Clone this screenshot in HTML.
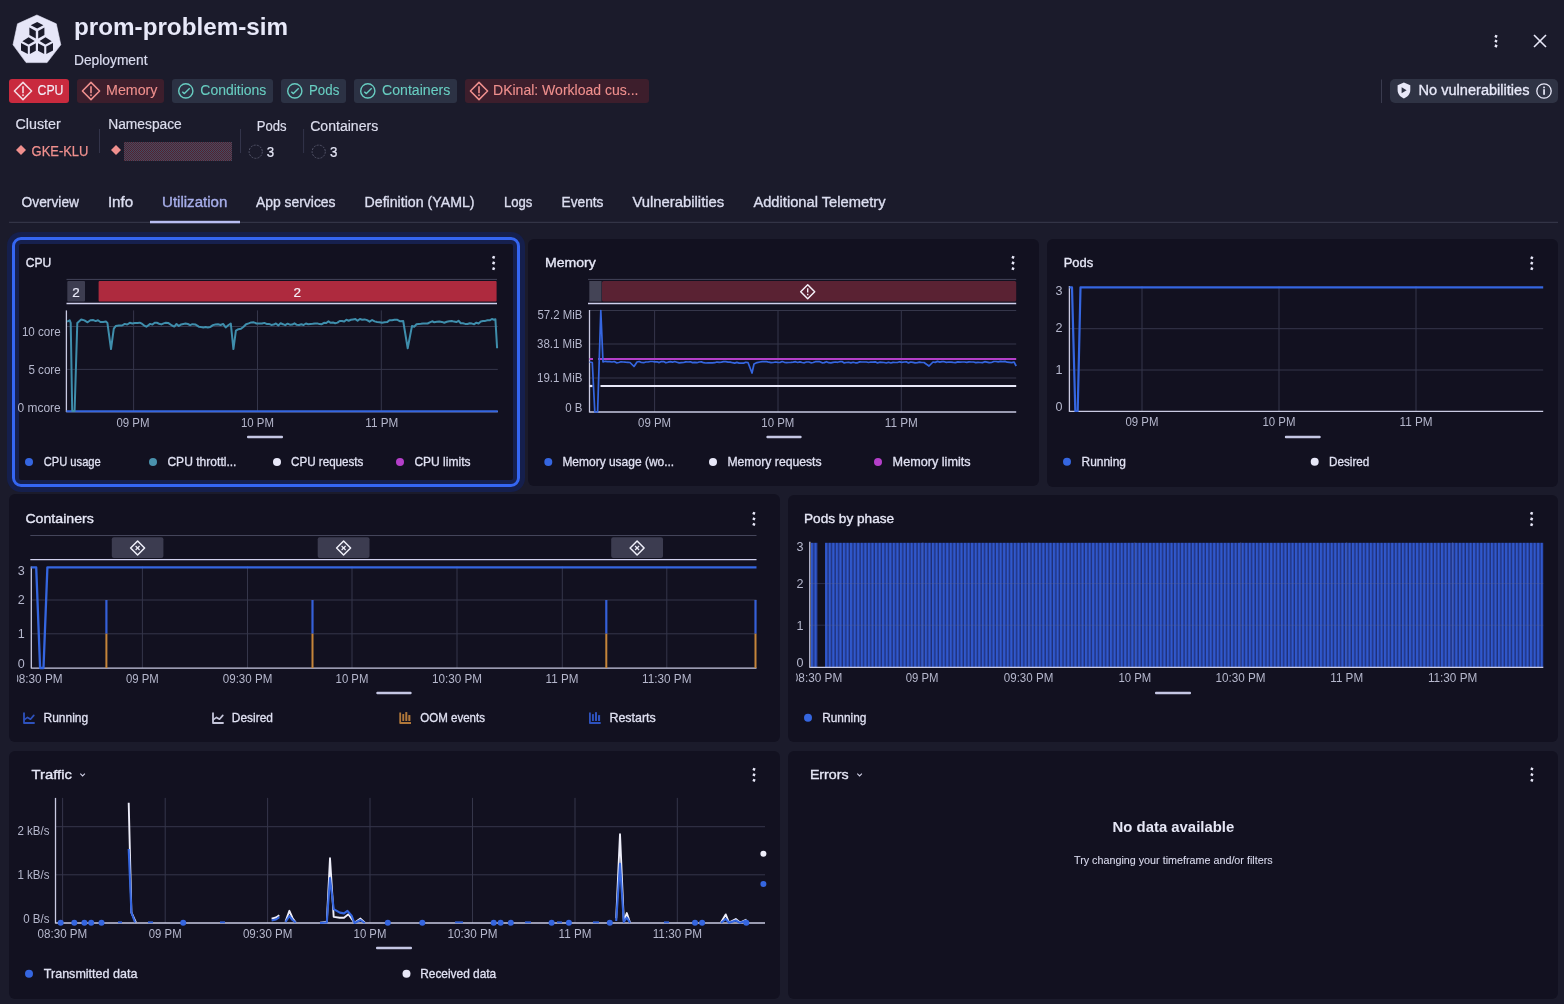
<!DOCTYPE html>
<html><head><meta charset="utf-8"><title>prom-problem-sim</title>
<style>
html,body{margin:0;padding:0;width:1564px;height:1004px;overflow:hidden;background:#1b1b2b;}
body{position:relative;font-family:"Liberation Sans", sans-serif;}
.card{position:absolute;background:#121120;border-radius:6px;}
svg{position:absolute;left:0;top:0;font-family:"Liberation Sans", sans-serif;will-change:transform;}
</style></head><body>
<div class="card" style="left:9px;top:239px;width:511px;height:248px"></div>
<div style="position:absolute;left:12px;top:237px;width:502px;height:244px;border:3px solid #3566f2;border-radius:9px;box-shadow:0 0 0 5px #151f4c, inset 0 0 0 4px #16204e"></div>
<div class="card" style="left:528px;top:239px;width:511px;height:247px"></div>
<div class="card" style="left:1047px;top:239px;width:511px;height:248px"></div>
<div class="card" style="left:9px;top:494px;width:771px;height:248px"></div>
<div class="card" style="left:788px;top:495px;width:770px;height:247px"></div>
<div class="card" style="left:9px;top:751px;width:771px;height:248px"></div>
<div class="card" style="left:788px;top:751px;width:770px;height:248px"></div>
<svg width="1564" height="1004" viewBox="0 0 1564 1004">
<polygon points="36.9,15.0 56.3,23.8 60.8,44.8 47.1,62.6 26.1,62.6 13.0,44.8 17.5,23.8" fill="#e6e6f8" stroke="#e6e6f8" stroke-width="0.6" stroke-linejoin="round"/>
<polygon points="30.7,25.2 37.2,22.0 43.4,25.2 37.2,28.4" fill="#1b1b2b"/>
<polygon points="29.4,27.6 35.8,31.1 35.8,38.6 29.4,35.1" fill="#1b1b2b"/>
<polygon points="38.2,31.1 44.4,27.6 44.4,35.1 38.2,38.6" fill="#1b1b2b"/>
<polygon points="22.4,41.3 28.6,37.3 34.7,41.0 28.6,44.5" fill="#1b1b2b"/>
<polygon points="21.0,42.9 27.8,46.4 27.8,54.0 21.0,50.5" fill="#1b1b2b"/>
<polygon points="29.9,46.4 35.8,43.2 35.8,50.7 29.9,54.0" fill="#1b1b2b"/>
<polygon points="39.6,41.0 45.5,37.3 51.7,41.3 45.5,44.5" fill="#1b1b2b"/>
<polygon points="38.0,43.2 44.2,46.4 44.2,54.0 38.0,50.7" fill="#1b1b2b"/>
<polygon points="46.3,46.4 53.0,42.9 53.0,50.5 46.3,54.0" fill="#1b1b2b"/>
<text x="74.0" y="35.0" font-size="24" font-weight="700" fill="#e8e9f9" textLength="214.0" lengthAdjust="spacingAndGlyphs">prom-problem-sim</text>
<text x="74.0" y="65.2" font-size="14" font-weight="400" fill="#d9dbee" stroke="#d9dbee" stroke-width="0.2" textLength="73.5" lengthAdjust="spacingAndGlyphs">Deployment</text>
<rect x="1494.75" y="35.05" width="2.5" height="2.5" fill="#e8e8f8" transform="rotate(22 1496.0 36.3)"/>
<rect x="1494.75" y="39.90" width="2.5" height="2.5" fill="#e8e8f8" transform="rotate(22 1496.0 41.1)"/>
<rect x="1494.75" y="44.75" width="2.5" height="2.5" fill="#e8e8f8" transform="rotate(22 1496.0 46.0)"/>
<line x1="1534.0" y1="35.0" x2="1546.0" y2="47.0" stroke="#e8e8f8" stroke-width="1.6" />
<line x1="1546.0" y1="35.0" x2="1534.0" y2="47.0" stroke="#e8e8f8" stroke-width="1.6" />
<rect x="9.0" y="79.0" width="60.0" height="24.0" rx="3" fill="#c92a3e" />
<path d="M14.4 91.0 L23.0 82.4 L31.6 91.0 L23.0 99.6 Z" fill="none" stroke="#f4dce4" stroke-width="1.5" stroke-linejoin="round"/>
<line x1="23.0" y1="86.2" x2="23.0" y2="93.2" stroke="#f4dce4" stroke-width="1.6" />
<rect x="22.2" y="94.4" width="1.6" height="1.7" rx="0" fill="#f4dce4" />
<text x="37.5" y="95.0" font-size="14" font-weight="400" fill="#f2f0fa" stroke="#f2f0fa" stroke-width="0.1" textLength="26.0" lengthAdjust="spacingAndGlyphs">CPU</text>
<rect x="77.0" y="79.0" width="87.0" height="24.0" rx="3" fill="#3d1e2c" />
<path d="M82.4 91.0 L91.0 82.4 L99.6 91.0 L91.0 99.6 Z" fill="none" stroke="#f0908e" stroke-width="1.5" stroke-linejoin="round"/>
<line x1="91.0" y1="86.2" x2="91.0" y2="93.2" stroke="#f0908e" stroke-width="1.6" />
<rect x="90.2" y="94.4" width="1.6" height="1.7" rx="0" fill="#f0908e" />
<text x="106.0" y="95.0" font-size="14" font-weight="400" fill="#f0908e" stroke="#f0908e" stroke-width="0.1" textLength="51.5" lengthAdjust="spacingAndGlyphs">Memory</text>
<rect x="172.0" y="79.0" width="101.0" height="24.0" rx="3" fill="#2c3244" />
<circle cx="185.8" cy="90.9" r="7.1" fill="none" stroke="#68cdc1" stroke-width="1.4"/>
<polyline points="182.3,91.8 184.4,93.6 189.7,88.3" fill="none" stroke="#68cdc1" stroke-width="1.4" stroke-linejoin="round" />
<text x="200.3" y="95.0" font-size="14" font-weight="400" fill="#68cdc1" stroke="#68cdc1" stroke-width="0.1" textLength="66.0" lengthAdjust="spacingAndGlyphs">Conditions</text>
<rect x="281.0" y="79.0" width="65.0" height="24.0" rx="3" fill="#2c3244" />
<circle cx="294.8" cy="90.9" r="7.1" fill="none" stroke="#68cdc1" stroke-width="1.4"/>
<polyline points="291.3,91.8 293.4,93.6 298.7,88.3" fill="none" stroke="#68cdc1" stroke-width="1.4" stroke-linejoin="round" />
<text x="309.0" y="95.0" font-size="14" font-weight="400" fill="#68cdc1" stroke="#68cdc1" stroke-width="0.1" textLength="30.3" lengthAdjust="spacingAndGlyphs">Pods</text>
<rect x="354.0" y="79.0" width="103.0" height="24.0" rx="3" fill="#2c3244" />
<circle cx="367.8" cy="90.9" r="7.1" fill="none" stroke="#68cdc1" stroke-width="1.4"/>
<polyline points="364.3,91.8 366.4,93.6 371.7,88.3" fill="none" stroke="#68cdc1" stroke-width="1.4" stroke-linejoin="round" />
<text x="382.0" y="95.0" font-size="14" font-weight="400" fill="#68cdc1" stroke="#68cdc1" stroke-width="0.1" textLength="68.3" lengthAdjust="spacingAndGlyphs">Containers</text>
<rect x="465.0" y="79.0" width="184.0" height="24.0" rx="3" fill="#3d1e2c" />
<path d="M470.4 91.0 L479.0 82.4 L487.6 91.0 L479.0 99.6 Z" fill="none" stroke="#f0908e" stroke-width="1.5" stroke-linejoin="round"/>
<line x1="479.0" y1="86.2" x2="479.0" y2="93.2" stroke="#f0908e" stroke-width="1.6" />
<rect x="478.2" y="94.4" width="1.6" height="1.7" rx="0" fill="#f0908e" />
<text x="493.0" y="95.0" font-size="14" font-weight="400" fill="#f0908e" stroke="#f0908e" stroke-width="0.1" textLength="145.5" lengthAdjust="spacingAndGlyphs">DKinal: Workload cus...</text>
<line x1="1381.5" y1="79.5" x2="1381.5" y2="103.0" stroke="#3a3b4e" stroke-width="1" />
<rect x="1390.0" y="79.0" width="168.0" height="24.0" rx="5" fill="#2f3344" />
<path d="M1397.6 85.2 L1403.9 82.6 L1410.3 85.2 L1410.3 90 C1410.3 94.2 1407.5 96.8 1403.9 98.4 C1400.3 96.8 1397.6 94.2 1397.6 90 Z" fill="#e8e8f8"/>
<path d="M1401.6 87.2 L1406.6 90.2 L1401.6 93.2 Z" fill="#2f3344"/>
<text x="1418.5" y="95.0" font-size="14" font-weight="400" fill="#e8e9f9" stroke="#e8e9f9" stroke-width="0.3" textLength="111.0" lengthAdjust="spacingAndGlyphs">No vulnerabilities</text>
<circle cx="1544" cy="91" r="7.2" fill="none" stroke="#e8e8f8" stroke-width="1.3"/>
<rect x="1543.2" y="89.2" width="1.7" height="5.6" rx="0" fill="#e8e8f8" />
<rect x="1543.2" y="86.6" width="1.7" height="1.7" rx="0" fill="#e8e8f8" />
<text x="15.5" y="129.0" font-size="14" font-weight="400" fill="#dcdded" stroke="#dcdded" stroke-width="0.2" textLength="45.3" lengthAdjust="spacingAndGlyphs">Cluster</text>
<text x="108.2" y="129.0" font-size="14" font-weight="400" fill="#dcdded" stroke="#dcdded" stroke-width="0.2" textLength="73.6" lengthAdjust="spacingAndGlyphs">Namespace</text>
<text x="256.7" y="131.0" font-size="14" font-weight="400" fill="#dcdded" stroke="#dcdded" stroke-width="0.2" textLength="29.9" lengthAdjust="spacingAndGlyphs">Pods</text>
<text x="310.2" y="131.0" font-size="14" font-weight="400" fill="#dcdded" stroke="#dcdded" stroke-width="0.2" textLength="68.0" lengthAdjust="spacingAndGlyphs">Containers</text>
<line x1="99.5" y1="129.0" x2="99.5" y2="153.0" stroke="#33344a" stroke-width="1" />
<line x1="240.5" y1="129.0" x2="240.5" y2="153.0" stroke="#33344a" stroke-width="1" />
<line x1="303.6" y1="129.0" x2="303.6" y2="153.0" stroke="#33344a" stroke-width="1" />
<path d="M21 145 L26 150 L21 155 L16 150 Z" fill="#f0908e"/>
<text x="31.6" y="155.5" font-size="14" font-weight="400" fill="#f0908e" stroke="#f0908e" stroke-width="0.25" textLength="56.8" lengthAdjust="spacingAndGlyphs">GKE-KLU</text>
<path d="M116 145 L121 150 L116 155 L111 150 Z" fill="#f0908e"/>
<defs><pattern id="redact" x="0" y="0" width="2" height="2" patternUnits="userSpaceOnUse"><rect width="2" height="2" fill="#454b62"/><rect width="1" height="1" fill="#53222f"/><rect x="1" y="1" width="1" height="1" fill="#53222f"/></pattern></defs>
<rect x="124.0" y="142.0" width="108.0" height="19.0" rx="0" fill="url(#redact)" />
<circle cx="255.7" cy="151.7" r="6.6" fill="none" stroke="#55566a" stroke-width="1" stroke-dasharray="2 1.2"/>
<text x="266.8" y="157.0" font-size="14" font-weight="400" fill="#e4e5f5" stroke="#e4e5f5" stroke-width="0.2" textLength="7.4" lengthAdjust="spacingAndGlyphs">3</text>
<circle cx="318.7" cy="151.7" r="6.6" fill="none" stroke="#55566a" stroke-width="1" stroke-dasharray="2 1.2"/>
<text x="330.0" y="157.0" font-size="14" font-weight="400" fill="#e4e5f5" stroke="#e4e5f5" stroke-width="0.2" textLength="7.4" lengthAdjust="spacingAndGlyphs">3</text>
<text x="21.6" y="207.3" font-size="14" font-weight="400" fill="#dcdef0" stroke="#dcdef0" stroke-width="0.35" textLength="57.4" lengthAdjust="spacingAndGlyphs">Overview</text>
<text x="107.9" y="207.3" font-size="14" font-weight="400" fill="#dcdef0" stroke="#dcdef0" stroke-width="0.35" textLength="25.3" lengthAdjust="spacingAndGlyphs">Info</text>
<text x="162.0" y="207.3" font-size="14" font-weight="400" fill="#a7aeea" stroke="#a7aeea" stroke-width="0.35" textLength="65.3" lengthAdjust="spacingAndGlyphs">Utilization</text>
<text x="256.0" y="207.3" font-size="14" font-weight="400" fill="#dcdef0" stroke="#dcdef0" stroke-width="0.35" textLength="79.5" lengthAdjust="spacingAndGlyphs">App services</text>
<text x="364.5" y="207.3" font-size="14" font-weight="400" fill="#dcdef0" stroke="#dcdef0" stroke-width="0.35" textLength="110.1" lengthAdjust="spacingAndGlyphs">Definition (YAML)</text>
<text x="504.0" y="207.3" font-size="14" font-weight="400" fill="#dcdef0" stroke="#dcdef0" stroke-width="0.35" textLength="28.4" lengthAdjust="spacingAndGlyphs">Logs</text>
<text x="561.5" y="207.3" font-size="14" font-weight="400" fill="#dcdef0" stroke="#dcdef0" stroke-width="0.35" textLength="42.0" lengthAdjust="spacingAndGlyphs">Events</text>
<text x="632.5" y="207.3" font-size="14" font-weight="400" fill="#dcdef0" stroke="#dcdef0" stroke-width="0.35" textLength="91.7" lengthAdjust="spacingAndGlyphs">Vulnerabilities</text>
<text x="753.4" y="207.3" font-size="14" font-weight="400" fill="#dcdef0" stroke="#dcdef0" stroke-width="0.35" textLength="132.1" lengthAdjust="spacingAndGlyphs">Additional Telemetry</text>
<line x1="9.0" y1="222.3" x2="1558.0" y2="222.3" stroke="#3a3b4e" stroke-width="1" />
<rect x="150.0" y="220.8" width="90.0" height="2.5" rx="0" fill="#b9bdf2" />
<text x="25.7" y="266.8" font-size="13.5" font-weight="400" fill="#e6e7f6" stroke="#e6e7f6" stroke-width="0.35" textLength="25.5" lengthAdjust="spacingAndGlyphs">CPU</text>
<rect x="492.35" y="256.05" width="2.5" height="2.5" fill="#e8e8f8" transform="rotate(22 493.6 257.3)"/>
<rect x="492.35" y="261.75" width="2.5" height="2.5" fill="#e8e8f8" transform="rotate(22 493.6 263.0)"/>
<rect x="492.35" y="267.45" width="2.5" height="2.5" fill="#e8e8f8" transform="rotate(22 493.6 268.7)"/>
<line x1="66.5" y1="279.4" x2="497.0" y2="279.4" stroke="#44455a" stroke-width="1" />
<rect x="67.3" y="281.0" width="17.7" height="20.5" rx="1" fill="#3d3d50" />
<text x="72.3" y="297.0" font-size="13" font-weight="400" fill="#ececfa" stroke="#ececfa" stroke-width="0.2" textLength="7.5" lengthAdjust="spacingAndGlyphs">2</text>
<rect x="98.6" y="281.0" width="398.0" height="20.5" rx="1" fill="#ae2a3e" />
<text x="293.6" y="297.0" font-size="13" font-weight="400" fill="#f4f0f8" stroke="#f4f0f8" stroke-width="0.2" textLength="7.5" lengthAdjust="spacingAndGlyphs">2</text>
<line x1="66.5" y1="303.5" x2="497.0" y2="303.5" stroke="#d0d0ec" stroke-width="1.4" />
<line x1="66.4" y1="326.5" x2="497.8" y2="326.5" stroke="#35364a" stroke-width="1" />
<line x1="66.4" y1="369.4" x2="497.8" y2="369.4" stroke="#35364a" stroke-width="1" />
<line x1="133.6" y1="310.4" x2="133.6" y2="411.6" stroke="#35364a" stroke-width="1" />
<line x1="257.5" y1="310.4" x2="257.5" y2="411.6" stroke="#35364a" stroke-width="1" />
<line x1="381.3" y1="310.4" x2="381.3" y2="411.6" stroke="#35364a" stroke-width="1" />
<line x1="66.4" y1="310.4" x2="66.4" y2="412.1" stroke="#c9cae2" stroke-width="1.3" />
<line x1="66.4" y1="411.6" x2="497.8" y2="411.6" stroke="#c9cae2" stroke-width="1.3" />
<line x1="66.4" y1="411.2" x2="497.8" y2="411.2" stroke="#3566e0" stroke-width="2" />
<text x="21.9" y="336.0" font-size="12" font-weight="400" fill="#b5b7cc" textLength="38.8" lengthAdjust="spacingAndGlyphs">10 core</text>
<text x="28.4" y="374.2" font-size="12" font-weight="400" fill="#b5b7cc" textLength="32.3" lengthAdjust="spacingAndGlyphs">5 core</text>
<text x="17.6" y="411.6" font-size="12" font-weight="400" fill="#b5b7cc" textLength="43.1" lengthAdjust="spacingAndGlyphs">0 mcore</text>
<text x="116.5" y="427.0" font-size="12" font-weight="400" fill="#b5b7cc" textLength="33.0" lengthAdjust="spacingAndGlyphs">09 PM</text>
<text x="241.0" y="427.0" font-size="12" font-weight="400" fill="#b5b7cc" textLength="33.0" lengthAdjust="spacingAndGlyphs">10 PM</text>
<text x="365.3" y="427.0" font-size="12" font-weight="400" fill="#b5b7cc" textLength="33.0" lengthAdjust="spacingAndGlyphs">11 PM</text>
<rect x="247.0" y="435.8" width="36.0" height="2.4" rx="1" fill="#c5c7e4" />
<circle cx="29.0" cy="462.0" r="4" fill="#3566e0"/>
<text x="43.7" y="466.0" font-size="13" font-weight="400" fill="#e0e1f2" stroke="#e0e1f2" stroke-width="0.3" textLength="57.1" lengthAdjust="spacingAndGlyphs">CPU usage</text>
<circle cx="153.0" cy="462.0" r="4" fill="#4a92ad"/>
<text x="167.4" y="466.0" font-size="13" font-weight="400" fill="#e0e1f2" stroke="#e0e1f2" stroke-width="0.3" textLength="69.1" lengthAdjust="spacingAndGlyphs">CPU throttl...</text>
<circle cx="277.0" cy="462.0" r="4" fill="#e8e8f8"/>
<text x="291.0" y="466.0" font-size="13" font-weight="400" fill="#e0e1f2" stroke="#e0e1f2" stroke-width="0.3" textLength="72.4" lengthAdjust="spacingAndGlyphs">CPU requests</text>
<circle cx="400.0" cy="462.0" r="4" fill="#b43fc9"/>
<text x="414.4" y="466.0" font-size="13" font-weight="400" fill="#e0e1f2" stroke="#e0e1f2" stroke-width="0.3" textLength="56.1" lengthAdjust="spacingAndGlyphs">CPU limits</text>
<polyline points="67.1,321.6 69.7,320.3 70.7,322.9 72.2,411.0 74.6,411.0 77.3,322.9 81.2,319.5 84.4,320.4 87.6,322.3 90.4,320.3 93.3,320.1 95.7,321.1 98.0,320.3 100.4,322.0 103.2,321.9 106.1,321.6 107.4,322.9 111.0,349.1 113.8,328.7 115.7,326.1 118.9,325.5 122.1,325.5 124.7,323.9 127.2,324.5 129.8,322.8 132.3,323.5 134.9,323.0 137.4,322.9 139.7,322.7 141.9,323.7 144.2,325.6 146.4,326.7 150.2,323.9 152.4,324.6 154.7,322.7 156.9,322.8 159.1,323.7 161.4,324.4 163.6,323.4 165.9,322.8 168.1,322.9 172.0,325.5 174.3,326.6 176.5,324.0 178.8,326.0 181.1,324.4 183.3,323.9 185.6,323.6 187.9,324.0 190.1,325.2 192.4,324.2 195.6,324.6 198.8,326.7 201.1,327.1 203.3,327.4 205.6,326.9 207.8,327.4 210.4,326.9 212.9,325.1 215.4,324.5 218.0,324.3 220.6,325.0 223.1,323.9 225.7,327.4 228.2,325.3 230.8,323.5 233.4,349.1 235.9,330.6 238.4,329.2 241.0,328.7 243.6,326.7 246.1,324.2 248.7,323.4 251.2,322.4 253.8,322.3 256.5,323.5 259.3,323.6 262.0,323.5 264.3,322.9 266.6,323.9 269.0,323.9 271.3,324.9 273.6,324.6 275.9,323.5 278.3,325.4 280.6,323.3 282.9,324.2 285.2,325.2 287.6,323.7 289.9,324.7 292.2,324.6 294.5,323.3 296.8,324.8 299.0,325.0 301.3,324.3 303.6,325.0 305.9,323.5 308.2,324.3 310.4,324.0 312.7,323.8 315.0,323.4 317.3,323.4 319.5,324.1 321.8,324.2 324.0,322.8 326.3,323.1 328.5,321.3 330.7,322.8 333.0,322.5 335.2,323.2 337.5,322.6 339.7,321.0 341.9,321.1 344.2,321.6 346.4,319.8 348.7,320.7 350.9,319.8 353.1,319.4 355.4,319.1 357.6,320.8 359.9,318.9 362.1,319.7 364.6,319.4 367.1,320.1 369.6,321.7 372.1,320.0 374.6,321.4 377.1,322.0 379.6,322.2 382.1,322.8 384.6,322.3 387.1,322.1 389.5,320.2 392.0,320.2 394.5,319.7 397.0,319.7 400.1,321.3 403.2,321.0 407.7,348.3 412.0,325.9 414.2,326.7 416.5,324.3 418.7,323.9 420.9,323.7 423.1,323.4 425.4,323.6 427.6,323.5 429.8,322.3 432.1,321.3 434.3,322.2 436.8,321.8 439.3,321.5 441.8,321.9 444.3,322.7 446.8,321.8 449.3,321.2 451.8,321.0 454.0,321.6 456.3,322.1 458.5,320.8 460.8,323.3 463.0,323.3 465.2,323.9 467.5,324.0 469.7,323.3 472.0,323.6 474.2,324.2 476.4,322.7 478.6,323.5 480.8,321.6 483.0,321.1 485.3,320.9 487.5,320.3 489.7,320.3 491.9,319.0 494.1,319.7 495.4,319.2 497.1,348.3" fill="none" stroke="#3f8eac" stroke-width="2.0" stroke-linejoin="round" />
<text x="545.0" y="267.0" font-size="13.5" font-weight="400" fill="#e6e7f6" stroke="#e6e7f6" stroke-width="0.35" textLength="50.8" lengthAdjust="spacingAndGlyphs">Memory</text>
<rect x="1011.75" y="256.05" width="2.5" height="2.5" fill="#e8e8f8" transform="rotate(22 1013.0 257.3)"/>
<rect x="1011.75" y="261.75" width="2.5" height="2.5" fill="#e8e8f8" transform="rotate(22 1013.0 263.0)"/>
<rect x="1011.75" y="267.45" width="2.5" height="2.5" fill="#e8e8f8" transform="rotate(22 1013.0 268.7)"/>
<line x1="588.0" y1="279.4" x2="1016.2" y2="279.4" stroke="#44455a" stroke-width="1" />
<rect x="589.3" y="281.0" width="12.2" height="20.5" rx="0" fill="#444456" />
<rect x="602.0" y="281.0" width="414.2" height="20.5" rx="1.5" fill="#5a2233" />
<path d="M800.7 291.8 L807.7 284.8 L814.7 291.8 L807.7 298.8 Z" fill="none" stroke="#f4f0f8" stroke-width="1.5" stroke-linejoin="round"/>
<line x1="807.7" y1="288.3" x2="807.7" y2="292.6" stroke="#f4f0f8" stroke-width="1.4" />
<rect x="807.0" y="293.8" width="1.4" height="1.5" rx="0" fill="#f4f0f8" />
<line x1="588.0" y1="303.5" x2="1016.2" y2="303.5" stroke="#d0d0ec" stroke-width="1.4" />
<line x1="589.5" y1="310.5" x2="1016.2" y2="310.5" stroke="#35364a" stroke-width="1" />
<line x1="589.5" y1="344.0" x2="1016.2" y2="344.0" stroke="#35364a" stroke-width="1" />
<line x1="589.5" y1="378.0" x2="1016.2" y2="378.0" stroke="#35364a" stroke-width="1" />
<line x1="654.6" y1="310.0" x2="654.6" y2="412.0" stroke="#35364a" stroke-width="1" />
<line x1="778.0" y1="310.0" x2="778.0" y2="412.0" stroke="#35364a" stroke-width="1" />
<line x1="901.3" y1="310.0" x2="901.3" y2="412.0" stroke="#35364a" stroke-width="1" />
<line x1="589.5" y1="310.0" x2="589.5" y2="412.5" stroke="#c9cae2" stroke-width="1.3" />
<line x1="589.5" y1="412.0" x2="1016.2" y2="412.0" stroke="#c9cae2" stroke-width="1.3" />
<text x="537.4" y="319.0" font-size="12" font-weight="400" fill="#b5b7cc" textLength="45.0" lengthAdjust="spacingAndGlyphs">57.2 MiB</text>
<text x="537.0" y="348.0" font-size="12" font-weight="400" fill="#b5b7cc" textLength="45.4" lengthAdjust="spacingAndGlyphs">38.1 MiB</text>
<text x="537.0" y="382.0" font-size="12" font-weight="400" fill="#b5b7cc" textLength="45.4" lengthAdjust="spacingAndGlyphs">19.1 MiB</text>
<text x="565.2" y="411.7" font-size="12" font-weight="400" fill="#b5b7cc" textLength="17.2" lengthAdjust="spacingAndGlyphs">0 B</text>
<text x="638.1" y="427.0" font-size="12" font-weight="400" fill="#b5b7cc" textLength="33.0" lengthAdjust="spacingAndGlyphs">09 PM</text>
<text x="761.3" y="427.0" font-size="12" font-weight="400" fill="#b5b7cc" textLength="33.0" lengthAdjust="spacingAndGlyphs">10 PM</text>
<text x="884.8" y="427.0" font-size="12" font-weight="400" fill="#b5b7cc" textLength="33.0" lengthAdjust="spacingAndGlyphs">11 PM</text>
<rect x="766.4" y="435.8" width="35.2" height="2.4" rx="1" fill="#c5c7e4" />
<polyline points="589.5,386.0 592.5,386.0" fill="none" stroke="#e8e8f8" stroke-width="2.2" stroke-linejoin="round" />
<polyline points="600.5,386.0 1016.2,386.0" fill="none" stroke="#e8e8f8" stroke-width="2.2" stroke-linejoin="round" />
<polyline points="589.5,359.0 593.0,359.0" fill="none" stroke="#b43fc9" stroke-width="2" stroke-linejoin="round" />
<polyline points="598.0,359.0 1016.2,359.0" fill="none" stroke="#b43fc9" stroke-width="2" stroke-linejoin="round" />
<polyline points="589.5,362.0 592.3,362.5 594.8,412.0 597.6,412.0 600.8,310.5 603.0,362.0 605.2,361.3 607.5,361.6 609.8,361.6 612.0,362.0 614.2,361.5 616.5,362.8 618.8,362.5 621.0,361.8 623.2,362.0 625.5,362.2 627.8,362.3 630.0,362.5 634.0,366.5 637.0,362.0 639.2,361.5 641.4,362.5 643.7,362.7 645.9,362.0 648.1,362.0 650.3,361.5 652.5,361.5 654.8,361.9 657.0,361.8 659.2,362.6 661.4,361.6 663.6,361.5 665.9,362.8 668.1,362.2 670.3,361.7 672.5,362.2 674.7,361.5 677.0,362.2 679.2,362.9 681.4,362.7 683.6,362.5 685.8,361.9 688.1,362.0 690.3,361.8 692.5,362.6 694.7,362.3 696.9,362.7 699.2,362.0 701.4,361.9 703.6,362.7 705.8,363.0 708.0,362.8 710.3,362.8 712.5,362.8 714.7,362.7 716.9,362.0 719.1,362.4 721.4,362.2 723.6,361.7 725.8,361.7 728.0,362.1 730.2,362.1 732.5,362.7 734.7,363.1 736.9,362.4 739.1,363.1 741.3,363.2 743.6,363.1 745.8,362.3 748.0,362.5 752.0,373.0 754.0,364.0 757.0,362.6 760.0,362.0 762.2,361.6 764.4,361.6 766.6,361.6 768.9,362.2 771.1,362.6 773.3,362.5 775.5,362.0 777.7,362.3 779.9,362.5 782.2,361.5 784.4,362.3 786.6,362.7 788.8,362.5 791.0,362.4 793.2,362.1 795.5,361.7 797.7,362.5 799.9,361.9 802.1,362.5 804.3,362.8 806.5,362.0 808.8,362.0 811.0,362.8 813.2,362.5 815.4,361.7 817.6,361.7 819.8,361.7 822.1,362.8 824.3,362.6 826.5,361.7 828.7,362.7 830.9,362.9 833.1,362.4 835.4,362.0 837.6,362.3 839.8,361.7 842.0,361.6 844.2,362.9 846.4,362.5 848.6,362.3 850.9,362.9 853.1,362.2 855.3,362.8 857.5,362.8 859.7,361.9 861.9,362.0 864.2,362.0 866.4,362.0 868.6,362.5 870.8,362.0 873.0,362.2 875.2,361.8 877.5,362.9 879.7,362.2 881.9,362.3 884.1,362.5 886.3,363.0 888.5,362.3 890.8,363.0 893.0,362.4 895.2,362.5 897.4,362.5 899.6,361.8 901.8,362.3 904.1,362.0 906.3,361.8 908.5,362.9 910.7,362.0 912.9,362.4 915.1,362.8 917.4,362.6 919.6,362.2 921.8,362.5 924.0,362.5 926.5,364.3 929.0,366.0 933.0,362.0 935.2,362.4 937.5,361.4 939.8,362.1 942.0,361.6 944.2,361.7 946.5,362.4 948.8,362.0 951.0,362.1 953.2,362.4 955.5,362.6 957.8,361.9 960.0,362.2 962.2,362.0 964.5,362.0 966.8,362.3 969.0,361.9 971.2,362.0 973.5,362.0 975.8,362.6 978.0,362.3 980.2,362.5 982.5,362.6 984.8,361.7 987.0,362.1 989.2,362.6 991.5,362.5 993.8,361.5 996.0,361.5 998.2,361.9 1000.5,361.4 1002.8,361.6 1005.0,361.4 1007.2,362.2 1009.5,362.4 1011.8,362.6 1014.0,362.0 1016.2,366.0" fill="none" stroke="#3566e0" stroke-width="1.7" stroke-linejoin="round" />
<circle cx="548.3" cy="462.0" r="4" fill="#3566e0"/>
<text x="562.4" y="466.0" font-size="13" font-weight="400" fill="#e0e1f2" stroke="#e0e1f2" stroke-width="0.3" textLength="111.8" lengthAdjust="spacingAndGlyphs">Memory usage (wo...</text>
<circle cx="713.0" cy="462.0" r="4" fill="#e8e8f8"/>
<text x="727.4" y="466.0" font-size="13" font-weight="400" fill="#e0e1f2" stroke="#e0e1f2" stroke-width="0.3" textLength="94.2" lengthAdjust="spacingAndGlyphs">Memory requests</text>
<circle cx="878.0" cy="462.0" r="4" fill="#b43fc9"/>
<text x="892.6" y="466.0" font-size="13" font-weight="400" fill="#e0e1f2" stroke="#e0e1f2" stroke-width="0.3" textLength="78.0" lengthAdjust="spacingAndGlyphs">Memory limits</text>
<text x="1063.7" y="267.0" font-size="13.5" font-weight="400" fill="#e6e7f6" stroke="#e6e7f6" stroke-width="0.35" textLength="29.5" lengthAdjust="spacingAndGlyphs">Pods</text>
<rect x="1530.55" y="256.55" width="2.5" height="2.5" fill="#e8e8f8" transform="rotate(22 1531.8 257.8)"/>
<rect x="1530.55" y="262.00" width="2.5" height="2.5" fill="#e8e8f8" transform="rotate(22 1531.8 263.2)"/>
<rect x="1530.55" y="267.45" width="2.5" height="2.5" fill="#e8e8f8" transform="rotate(22 1531.8 268.7)"/>
<line x1="1069.4" y1="328.7" x2="1543.2" y2="328.7" stroke="#35364a" stroke-width="1" />
<line x1="1069.4" y1="370.0" x2="1543.2" y2="370.0" stroke="#35364a" stroke-width="1" />
<line x1="1142.0" y1="286.0" x2="1142.0" y2="411.4" stroke="#35364a" stroke-width="1" />
<line x1="1279.0" y1="286.0" x2="1279.0" y2="411.4" stroke="#35364a" stroke-width="1" />
<line x1="1416.0" y1="286.0" x2="1416.0" y2="411.4" stroke="#35364a" stroke-width="1" />
<line x1="1069.4" y1="286.0" x2="1069.4" y2="411.9" stroke="#c9cae2" stroke-width="1.3" />
<line x1="1069.4" y1="411.4" x2="1543.2" y2="411.4" stroke="#c9cae2" stroke-width="1.3" />
<text x="1055.6" y="294.8" font-size="12" font-weight="400" fill="#b5b7cc" textLength="7.0" lengthAdjust="spacingAndGlyphs">3</text>
<text x="1055.6" y="332.2" font-size="12" font-weight="400" fill="#b5b7cc" textLength="7.0" lengthAdjust="spacingAndGlyphs">2</text>
<text x="1055.6" y="374.0" font-size="12" font-weight="400" fill="#b5b7cc" textLength="7.0" lengthAdjust="spacingAndGlyphs">1</text>
<text x="1055.6" y="411.4" font-size="12" font-weight="400" fill="#b5b7cc" textLength="7.0" lengthAdjust="spacingAndGlyphs">0</text>
<text x="1125.5" y="426.3" font-size="12" font-weight="400" fill="#b5b7cc" textLength="33.0" lengthAdjust="spacingAndGlyphs">09 PM</text>
<text x="1262.5" y="426.3" font-size="12" font-weight="400" fill="#b5b7cc" textLength="33.0" lengthAdjust="spacingAndGlyphs">10 PM</text>
<text x="1399.5" y="426.3" font-size="12" font-weight="400" fill="#b5b7cc" textLength="33.0" lengthAdjust="spacingAndGlyphs">11 PM</text>
<rect x="1284.9" y="435.8" width="35.8" height="2.4" rx="1" fill="#c5c7e4" />
<polyline points="1069.4,287.3 1072.0,287.3 1075.3,411.0 1077.7,411.0 1080.5,287.3 1543.2,287.3" fill="none" stroke="#3566e0" stroke-width="2.2" stroke-linejoin="round" />
<circle cx="1067.0" cy="461.7" r="4" fill="#3566e0"/>
<text x="1081.6" y="466.0" font-size="13" font-weight="400" fill="#e0e1f2" stroke="#e0e1f2" stroke-width="0.3" textLength="44.4" lengthAdjust="spacingAndGlyphs">Running</text>
<circle cx="1314.7" cy="461.7" r="4" fill="#e8e8f8"/>
<text x="1329.0" y="466.0" font-size="13" font-weight="400" fill="#e0e1f2" stroke="#e0e1f2" stroke-width="0.3" textLength="40.3" lengthAdjust="spacingAndGlyphs">Desired</text>
<text x="25.4" y="523.0" font-size="13.5" font-weight="400" fill="#e6e7f6" stroke="#e6e7f6" stroke-width="0.35" textLength="68.5" lengthAdjust="spacingAndGlyphs">Containers</text>
<rect x="752.65" y="512.05" width="2.5" height="2.5" fill="#e8e8f8" transform="rotate(22 753.9 513.3)"/>
<rect x="752.65" y="517.60" width="2.5" height="2.5" fill="#e8e8f8" transform="rotate(22 753.9 518.9)"/>
<rect x="752.65" y="523.15" width="2.5" height="2.5" fill="#e8e8f8" transform="rotate(22 753.9 524.4)"/>
<line x1="30.3" y1="535.5" x2="756.5" y2="535.5" stroke="#44455a" stroke-width="1" />
<rect x="111.8" y="537.2" width="51.6" height="20.7" rx="2" fill="#3c3c50" />
<path d="M130.6 548.0 L137.6 541.0 L144.6 548.0 L137.6 555.0 Z" fill="none" stroke="#f0f0fa" stroke-width="1.5" stroke-linejoin="round"/>
<line x1="135.6" y1="546.0" x2="139.6" y2="550.0" stroke="#f0f0fa" stroke-width="1.2" />
<line x1="139.6" y1="546.0" x2="135.6" y2="550.0" stroke="#f0f0fa" stroke-width="1.2" />
<rect x="317.7" y="537.2" width="51.8" height="20.7" rx="2" fill="#3c3c50" />
<path d="M336.6 548.0 L343.6 541.0 L350.6 548.0 L343.6 555.0 Z" fill="none" stroke="#f0f0fa" stroke-width="1.5" stroke-linejoin="round"/>
<line x1="341.6" y1="546.0" x2="345.6" y2="550.0" stroke="#f0f0fa" stroke-width="1.2" />
<line x1="345.6" y1="546.0" x2="341.6" y2="550.0" stroke="#f0f0fa" stroke-width="1.2" />
<rect x="611.2" y="537.2" width="51.8" height="20.7" rx="2" fill="#3c3c50" />
<path d="M630.1 548.0 L637.1 541.0 L644.1 548.0 L637.1 555.0 Z" fill="none" stroke="#f0f0fa" stroke-width="1.5" stroke-linejoin="round"/>
<line x1="635.1" y1="546.0" x2="639.1" y2="550.0" stroke="#f0f0fa" stroke-width="1.2" />
<line x1="639.1" y1="546.0" x2="635.1" y2="550.0" stroke="#f0f0fa" stroke-width="1.2" />
<line x1="30.3" y1="559.6" x2="756.5" y2="559.6" stroke="#d0d0ec" stroke-width="1.4" />
<line x1="31.3" y1="600.0" x2="756.5" y2="600.0" stroke="#35364a" stroke-width="1" />
<line x1="31.3" y1="633.8" x2="756.5" y2="633.8" stroke="#35364a" stroke-width="1" />
<line x1="142.4" y1="566.4" x2="142.4" y2="668.1" stroke="#35364a" stroke-width="1" />
<line x1="247.5" y1="566.4" x2="247.5" y2="668.1" stroke="#35364a" stroke-width="1" />
<line x1="352.0" y1="566.4" x2="352.0" y2="668.1" stroke="#35364a" stroke-width="1" />
<line x1="457.0" y1="566.4" x2="457.0" y2="668.1" stroke="#35364a" stroke-width="1" />
<line x1="562.3" y1="566.4" x2="562.3" y2="668.1" stroke="#35364a" stroke-width="1" />
<line x1="666.8" y1="566.4" x2="666.8" y2="668.1" stroke="#35364a" stroke-width="1" />
<line x1="31.3" y1="566.4" x2="31.3" y2="668.6" stroke="#c9cae2" stroke-width="1.3" />
<line x1="31.3" y1="668.1" x2="756.5" y2="668.1" stroke="#c9cae2" stroke-width="1.3" />
<text x="17.8" y="575.4" font-size="12" font-weight="400" fill="#b5b7cc" textLength="7.0" lengthAdjust="spacingAndGlyphs">3</text>
<text x="17.8" y="604.0" font-size="12" font-weight="400" fill="#b5b7cc" textLength="7.0" lengthAdjust="spacingAndGlyphs">2</text>
<text x="17.8" y="638.0" font-size="12" font-weight="400" fill="#b5b7cc" textLength="7.0" lengthAdjust="spacingAndGlyphs">1</text>
<text x="17.8" y="668.0" font-size="12" font-weight="400" fill="#b5b7cc" textLength="7.0" lengthAdjust="spacingAndGlyphs">0</text>
<clipPath id="clipc"><rect x="17" y="660" width="760" height="40"/></clipPath>
<g clip-path="url(#clipc)">
<text x="12.2" y="683.0" font-size="12" font-weight="400" fill="#b5b7cc" textLength="50.4" lengthAdjust="spacingAndGlyphs">08:30 PM</text>
</g>
<text x="126.0" y="683.0" font-size="12" font-weight="400" fill="#b5b7cc" textLength="32.8" lengthAdjust="spacingAndGlyphs">09 PM</text>
<text x="222.8" y="683.0" font-size="12" font-weight="400" fill="#b5b7cc" textLength="49.5" lengthAdjust="spacingAndGlyphs">09:30 PM</text>
<text x="335.6" y="683.0" font-size="12" font-weight="400" fill="#b5b7cc" textLength="32.8" lengthAdjust="spacingAndGlyphs">10 PM</text>
<text x="432.0" y="683.0" font-size="12" font-weight="400" fill="#b5b7cc" textLength="50.0" lengthAdjust="spacingAndGlyphs">10:30 PM</text>
<text x="545.6" y="683.0" font-size="12" font-weight="400" fill="#b5b7cc" textLength="32.8" lengthAdjust="spacingAndGlyphs">11 PM</text>
<text x="642.1" y="683.0" font-size="12" font-weight="400" fill="#b5b7cc" textLength="49.4" lengthAdjust="spacingAndGlyphs">11:30 PM</text>
<rect x="105.3" y="600.0" width="2.2" height="33.7" rx="0" fill="#3560d8" />
<rect x="105.4" y="633.7" width="2.0" height="34.3" rx="0" fill="#c5853a" />
<rect x="311.4" y="600.0" width="2.2" height="33.7" rx="0" fill="#3560d8" />
<rect x="311.5" y="633.7" width="2.0" height="34.3" rx="0" fill="#c5853a" />
<rect x="605.2" y="600.0" width="2.2" height="33.7" rx="0" fill="#3560d8" />
<rect x="605.3" y="633.7" width="2.0" height="34.3" rx="0" fill="#c5853a" />
<rect x="754.4" y="600.0" width="2.2" height="33.7" rx="0" fill="#3560d8" />
<rect x="754.5" y="633.7" width="2.0" height="34.3" rx="0" fill="#c5853a" />
<polyline points="31.3,567.3 36.2,567.3 40.1,668.0 43.5,668.0 47.4,567.3 756.5,567.3" fill="none" stroke="#3566e0" stroke-width="2.3" stroke-linejoin="round" />
<rect x="376.3" y="691.8" width="35.3" height="2.4" rx="1" fill="#c5c7e4" />
<path d="M24.0 712.4 L24.0 723.0 L34.7 723.0" fill="none" stroke="#2e52bd" stroke-width="1.8" stroke-linejoin="round"/>
<path d="M24.4 719.6 L27.5 717.4 L30.5 719.2 L33.8 715.4" fill="none" stroke="#2e52bd" stroke-width="1.7" stroke-linejoin="round" stroke-linecap="round"/>
<text x="43.5" y="722.2" font-size="13" font-weight="400" fill="#e0e1f2" stroke="#e0e1f2" stroke-width="0.3" textLength="44.7" lengthAdjust="spacingAndGlyphs">Running</text>
<path d="M213.0 712.4 L213.0 723.0 L223.7 723.0" fill="none" stroke="#c4c5da" stroke-width="1.8" stroke-linejoin="round"/>
<path d="M213.4 719.6 L216.5 717.4 L219.5 719.2 L222.8 715.4" fill="none" stroke="#c4c5da" stroke-width="1.7" stroke-linejoin="round" stroke-linecap="round"/>
<text x="231.8" y="722.2" font-size="13" font-weight="400" fill="#e0e1f2" stroke="#e0e1f2" stroke-width="0.3" textLength="41.1" lengthAdjust="spacingAndGlyphs">Desired</text>
<path d="M400.2 712.4 L400.2 723.0 L411.0 723.0" fill="none" stroke="#b0773a" stroke-width="1.8" stroke-linejoin="round"/>
<rect x="402.3" y="713.9" width="1.9" height="7.2" rx="0.6" fill="#b0773a" />
<rect x="405.3" y="711.9" width="2.0" height="9.2" rx="0.6" fill="#b0773a" />
<rect x="408.3" y="715.0" width="2.1" height="6.1" rx="0.6" fill="#b0773a" />
<text x="420.2" y="722.2" font-size="13" font-weight="400" fill="#e0e1f2" stroke="#e0e1f2" stroke-width="0.3" textLength="64.8" lengthAdjust="spacingAndGlyphs">OOM events</text>
<path d="M589.9 712.4 L589.9 723.0 L600.7 723.0" fill="none" stroke="#2e52bd" stroke-width="1.8" stroke-linejoin="round"/>
<rect x="592.0" y="713.9" width="1.9" height="7.2" rx="0.6" fill="#2e52bd" />
<rect x="595.0" y="711.9" width="2.0" height="9.2" rx="0.6" fill="#2e52bd" />
<rect x="598.0" y="715.0" width="2.1" height="6.1" rx="0.6" fill="#2e52bd" />
<text x="609.4" y="722.2" font-size="13" font-weight="400" fill="#e0e1f2" stroke="#e0e1f2" stroke-width="0.3" textLength="46.4" lengthAdjust="spacingAndGlyphs">Restarts</text>
<text x="804.0" y="523.0" font-size="13.5" font-weight="400" fill="#e6e7f6" stroke="#e6e7f6" stroke-width="0.35" textLength="90.1" lengthAdjust="spacingAndGlyphs">Pods by phase</text>
<rect x="1530.35" y="512.05" width="2.5" height="2.5" fill="#e8e8f8" transform="rotate(22 1531.6 513.3)"/>
<rect x="1530.35" y="517.75" width="2.5" height="2.5" fill="#e8e8f8" transform="rotate(22 1531.6 519.0)"/>
<rect x="1530.35" y="523.45" width="2.5" height="2.5" fill="#e8e8f8" transform="rotate(22 1531.6 524.7)"/>
<defs><pattern id="bars" x="810.9" y="0" width="3.56" height="10" patternUnits="userSpaceOnUse"><rect x="0" y="0" width="3.56" height="10" fill="#1f3078"/><rect x="0" y="0" width="2.2" height="10" fill="#3058cc"/></pattern></defs>
<rect x="811.0" y="542.8" width="6.6" height="124.5" rx="0" fill="url(#bars)" />
<rect x="825.0" y="542.8" width="718.3" height="124.5" rx="0" fill="url(#bars)" />
<line x1="809.8" y1="583.6" x2="1543.3" y2="583.6" stroke="rgba(90,100,150,0.35)" stroke-width="1" />
<line x1="809.8" y1="625.2" x2="1543.3" y2="625.2" stroke="rgba(90,100,150,0.35)" stroke-width="1" />
<line x1="922.9" y1="542.0" x2="922.9" y2="667.3" stroke="rgba(90,100,150,0.35)" stroke-width="1" />
<line x1="1028.8" y1="542.0" x2="1028.8" y2="667.3" stroke="rgba(90,100,150,0.35)" stroke-width="1" />
<line x1="1134.8" y1="542.0" x2="1134.8" y2="667.3" stroke="rgba(90,100,150,0.35)" stroke-width="1" />
<line x1="1240.7" y1="542.0" x2="1240.7" y2="667.3" stroke="rgba(90,100,150,0.35)" stroke-width="1" />
<line x1="1346.7" y1="542.0" x2="1346.7" y2="667.3" stroke="rgba(90,100,150,0.35)" stroke-width="1" />
<line x1="1452.6" y1="542.0" x2="1452.6" y2="667.3" stroke="rgba(90,100,150,0.35)" stroke-width="1" />
<line x1="809.8" y1="541.8" x2="809.8" y2="667.8" stroke="#c9cae2" stroke-width="1.3" />
<line x1="809.8" y1="667.3" x2="1543.3" y2="667.3" stroke="#c9cae2" stroke-width="1.3" />
<text x="796.6" y="550.8" font-size="12" font-weight="400" fill="#b5b7cc" textLength="7.0" lengthAdjust="spacingAndGlyphs">3</text>
<text x="796.6" y="587.8" font-size="12" font-weight="400" fill="#b5b7cc" textLength="7.0" lengthAdjust="spacingAndGlyphs">2</text>
<text x="796.6" y="629.7" font-size="12" font-weight="400" fill="#b5b7cc" textLength="7.0" lengthAdjust="spacingAndGlyphs">1</text>
<text x="796.6" y="666.8" font-size="12" font-weight="400" fill="#b5b7cc" textLength="7.0" lengthAdjust="spacingAndGlyphs">0</text>
<clipPath id="clipp"><rect x="796" y="660" width="760" height="40"/></clipPath>
<g clip-path="url(#clipp)">
<text x="791.8" y="682.0" font-size="12" font-weight="400" fill="#b5b7cc" textLength="50.4" lengthAdjust="spacingAndGlyphs">08:30 PM</text>
</g>
<text x="905.7" y="682.0" font-size="12" font-weight="400" fill="#b5b7cc" textLength="32.8" lengthAdjust="spacingAndGlyphs">09 PM</text>
<text x="1003.8" y="682.0" font-size="12" font-weight="400" fill="#b5b7cc" textLength="49.5" lengthAdjust="spacingAndGlyphs">09:30 PM</text>
<text x="1118.4" y="682.0" font-size="12" font-weight="400" fill="#b5b7cc" textLength="32.8" lengthAdjust="spacingAndGlyphs">10 PM</text>
<text x="1215.6" y="682.0" font-size="12" font-weight="400" fill="#b5b7cc" textLength="50.0" lengthAdjust="spacingAndGlyphs">10:30 PM</text>
<text x="1330.3" y="682.0" font-size="12" font-weight="400" fill="#b5b7cc" textLength="32.8" lengthAdjust="spacingAndGlyphs">11 PM</text>
<text x="1427.9" y="682.0" font-size="12" font-weight="400" fill="#b5b7cc" textLength="49.4" lengthAdjust="spacingAndGlyphs">11:30 PM</text>
<rect x="1155.0" y="691.8" width="36.0" height="2.4" rx="1" fill="#c5c7e4" />
<circle cx="808.0" cy="717.7" r="4" fill="#3566e0"/>
<text x="822.2" y="722.2" font-size="13" font-weight="400" fill="#e0e1f2" stroke="#e0e1f2" stroke-width="0.3" textLength="44.2" lengthAdjust="spacingAndGlyphs">Running</text>
<text x="31.5" y="779.0" font-size="13.5" font-weight="400" fill="#e6e7f6" stroke="#e6e7f6" stroke-width="0.35" textLength="40.4" lengthAdjust="spacingAndGlyphs">Traffic</text>
<path d="M80.3 773.6 L82.6 775.9 L84.9 773.6" fill="none" stroke="#d0d0e6" stroke-width="1.1"/>
<rect x="752.75" y="768.05" width="2.5" height="2.5" fill="#e8e8f8" transform="rotate(22 754.0 769.3)"/>
<rect x="752.75" y="773.55" width="2.5" height="2.5" fill="#e8e8f8" transform="rotate(22 754.0 774.8)"/>
<rect x="752.75" y="779.05" width="2.5" height="2.5" fill="#e8e8f8" transform="rotate(22 754.0 780.3)"/>
<line x1="55.5" y1="826.7" x2="765.0" y2="826.7" stroke="#35364a" stroke-width="1" />
<line x1="55.5" y1="874.8" x2="765.0" y2="874.8" stroke="#35364a" stroke-width="1" />
<line x1="62.6" y1="797.9" x2="62.6" y2="923.0" stroke="#35364a" stroke-width="1" />
<line x1="165.2" y1="797.9" x2="165.2" y2="923.0" stroke="#35364a" stroke-width="1" />
<line x1="267.6" y1="797.9" x2="267.6" y2="923.0" stroke="#35364a" stroke-width="1" />
<line x1="370.0" y1="797.9" x2="370.0" y2="923.0" stroke="#35364a" stroke-width="1" />
<line x1="472.5" y1="797.9" x2="472.5" y2="923.0" stroke="#35364a" stroke-width="1" />
<line x1="575.0" y1="797.9" x2="575.0" y2="923.0" stroke="#35364a" stroke-width="1" />
<line x1="677.3" y1="797.9" x2="677.3" y2="923.0" stroke="#35364a" stroke-width="1" />
<line x1="55.5" y1="797.9" x2="55.5" y2="923.5" stroke="#c9cae2" stroke-width="1.3" />
<line x1="55.5" y1="923.0" x2="765.0" y2="923.0" stroke="#c9cae2" stroke-width="1.3" />
<text x="17.5" y="835.3" font-size="12" font-weight="400" fill="#b5b7cc" textLength="32.0" lengthAdjust="spacingAndGlyphs">2 kB/s</text>
<text x="17.5" y="879.0" font-size="12" font-weight="400" fill="#b5b7cc" textLength="32.0" lengthAdjust="spacingAndGlyphs">1 kB/s</text>
<text x="23.2" y="923.0" font-size="12" font-weight="400" fill="#b5b7cc" textLength="26.3" lengthAdjust="spacingAndGlyphs">0 B/s</text>
<text x="37.5" y="938.0" font-size="12" font-weight="400" fill="#b5b7cc" textLength="49.8" lengthAdjust="spacingAndGlyphs">08:30 PM</text>
<text x="148.8" y="938.0" font-size="12" font-weight="400" fill="#b5b7cc" textLength="32.8" lengthAdjust="spacingAndGlyphs">09 PM</text>
<text x="242.9" y="938.0" font-size="12" font-weight="400" fill="#b5b7cc" textLength="49.5" lengthAdjust="spacingAndGlyphs">09:30 PM</text>
<text x="353.6" y="938.0" font-size="12" font-weight="400" fill="#b5b7cc" textLength="32.8" lengthAdjust="spacingAndGlyphs">10 PM</text>
<text x="447.5" y="938.0" font-size="12" font-weight="400" fill="#b5b7cc" textLength="50.0" lengthAdjust="spacingAndGlyphs">10:30 PM</text>
<text x="558.6" y="938.0" font-size="12" font-weight="400" fill="#b5b7cc" textLength="32.8" lengthAdjust="spacingAndGlyphs">11 PM</text>
<text x="652.7" y="938.0" font-size="12" font-weight="400" fill="#b5b7cc" textLength="49.4" lengthAdjust="spacingAndGlyphs">11:30 PM</text>
<rect x="376.0" y="946.8" width="36.0" height="2.4" rx="1" fill="#c5c7e4" />
<polyline points="128.7,802.7 131.4,912.5 135.9,922.5" fill="none" stroke="#eeeefa" stroke-width="1.9" stroke-linejoin="round" />
<polyline points="271.6,918.6 276.0,917.5 279.3,915.2" fill="none" stroke="#eeeefa" stroke-width="1.9" stroke-linejoin="round" />
<polyline points="285.5,921.5 289.4,910.8 292.5,918.0 295.7,922.5" fill="none" stroke="#eeeefa" stroke-width="1.9" stroke-linejoin="round" />
<polyline points="320.0,922.8 326.8,922.0 330.0,858.2 333.7,916.9 339.8,917.7 344.0,917.7 348.4,914.3 354.4,922.8 360.5,918.6 364.8,922.8" fill="none" stroke="#eeeefa" stroke-width="1.9" stroke-linejoin="round" />
<polyline points="616.2,918.2 620.0,834.2 623.8,921.0 626.8,913.1 630.1,922.7" fill="none" stroke="#eeeefa" stroke-width="1.9" stroke-linejoin="round" />
<polyline points="721.0,922.5 725.7,914.4 729.0,922.5 735.8,919.0 740.0,922.5 746.5,919.5" fill="none" stroke="#eeeefa" stroke-width="1.9" stroke-linejoin="round" />
<polyline points="128.7,849.0 131.4,912.5 135.1,922.5" fill="none" stroke="#3566e0" stroke-width="2.1" stroke-linejoin="round" />
<polyline points="271.6,920.5 276.0,919.5 279.3,917.2" fill="none" stroke="#3566e0" stroke-width="2.1" stroke-linejoin="round" />
<polyline points="285.5,922.0 289.4,916.0 292.5,920.0 295.7,922.5" fill="none" stroke="#3566e0" stroke-width="2.1" stroke-linejoin="round" />
<polyline points="320.0,923.0 326.8,922.5 330.0,878.0 333.7,909.1 339.8,912.6 344.0,913.4 347.5,910.8 351.8,916.0 354.4,923.0 360.5,920.0 364.8,923.0" fill="none" stroke="#3566e0" stroke-width="2.1" stroke-linejoin="round" />
<polyline points="616.2,921.0 620.0,863.8 623.8,922.0 626.8,917.5 630.1,922.7" fill="none" stroke="#3566e0" stroke-width="2.1" stroke-linejoin="round" />
<polyline points="721.0,922.8 725.7,919.0 729.0,922.8 735.8,920.5 740.0,922.8 746.5,920.5" fill="none" stroke="#3566e0" stroke-width="2.1" stroke-linejoin="round" />
<line x1="118.0" y1="922.3" x2="122.0" y2="922.3" stroke="#3566e0" stroke-width="1.8" />
<line x1="148.0" y1="922.3" x2="153.0" y2="922.3" stroke="#3566e0" stroke-width="1.8" />
<line x1="220.0" y1="922.3" x2="225.0" y2="922.3" stroke="#3566e0" stroke-width="1.8" />
<line x1="525.0" y1="922.3" x2="531.0" y2="922.3" stroke="#3566e0" stroke-width="1.8" />
<line x1="557.0" y1="922.3" x2="562.0" y2="922.3" stroke="#3566e0" stroke-width="1.8" />
<line x1="593.0" y1="922.3" x2="599.0" y2="922.3" stroke="#3566e0" stroke-width="1.8" />
<line x1="664.0" y1="922.3" x2="669.0" y2="922.3" stroke="#3566e0" stroke-width="1.8" />
<line x1="455.0" y1="922.3" x2="463.0" y2="922.3" stroke="#3566e0" stroke-width="1.8" />
<circle cx="60.7" cy="922.8" r="3" fill="#3566e0"/>
<circle cx="74.3" cy="922.8" r="3" fill="#3566e0"/>
<circle cx="84.4" cy="922.8" r="3" fill="#3566e0"/>
<circle cx="91.2" cy="922.8" r="3" fill="#3566e0"/>
<circle cx="101.5" cy="922.8" r="3" fill="#3566e0"/>
<circle cx="183.2" cy="922.8" r="3" fill="#3566e0"/>
<circle cx="387.8" cy="922.8" r="3" fill="#3566e0"/>
<circle cx="422.3" cy="922.8" r="3" fill="#3566e0"/>
<circle cx="493.7" cy="922.8" r="3" fill="#3566e0"/>
<circle cx="500.6" cy="922.8" r="3" fill="#3566e0"/>
<circle cx="510.8" cy="922.8" r="3" fill="#3566e0"/>
<circle cx="551.6" cy="922.8" r="3" fill="#3566e0"/>
<circle cx="568.9" cy="922.8" r="3" fill="#3566e0"/>
<circle cx="609.8" cy="922.8" r="3" fill="#3566e0"/>
<circle cx="695.0" cy="922.8" r="3" fill="#3566e0"/>
<circle cx="702.1" cy="922.8" r="3" fill="#3566e0"/>
<circle cx="746.3" cy="922.8" r="3" fill="#3566e0"/>
<circle cx="763.4" cy="853.7" r="3" fill="#eeeefa"/>
<circle cx="763.4" cy="884.0" r="3" fill="#3566e0"/>
<circle cx="29.0" cy="973.8" r="4" fill="#3566e0"/>
<text x="43.8" y="978.0" font-size="13" font-weight="400" fill="#e0e1f2" stroke="#e0e1f2" stroke-width="0.3" textLength="93.6" lengthAdjust="spacingAndGlyphs">Transmitted data</text>
<circle cx="406.5" cy="973.8" r="4" fill="#e8e8f8"/>
<text x="420.2" y="978.0" font-size="13" font-weight="400" fill="#e0e1f2" stroke="#e0e1f2" stroke-width="0.3" textLength="76.0" lengthAdjust="spacingAndGlyphs">Received data</text>
<text x="809.9" y="779.0" font-size="13.5" font-weight="400" fill="#e6e7f6" stroke="#e6e7f6" stroke-width="0.35" textLength="38.7" lengthAdjust="spacingAndGlyphs">Errors</text>
<path d="M857.3 773.6 L859.6 775.9 L861.9 773.6" fill="none" stroke="#d0d0e6" stroke-width="1.1"/>
<rect x="1530.65" y="767.65" width="2.5" height="2.5" fill="#e8e8f8" transform="rotate(22 1531.9 768.9)"/>
<rect x="1530.65" y="773.35" width="2.5" height="2.5" fill="#e8e8f8" transform="rotate(22 1531.9 774.6)"/>
<rect x="1530.65" y="779.05" width="2.5" height="2.5" fill="#e8e8f8" transform="rotate(22 1531.9 780.3)"/>
<text x="1112.6" y="832.0" font-size="14" font-weight="700" fill="#e6e7f6" textLength="121.6" lengthAdjust="spacingAndGlyphs">No data available</text>
<text x="1074.0" y="864.0" font-size="10.5" font-weight="400" fill="#d8d9ec" stroke="#d8d9ec" stroke-width="0.1" textLength="198.6" lengthAdjust="spacingAndGlyphs">Try changing your timeframe and/or filters</text>
</svg>
</body></html>
